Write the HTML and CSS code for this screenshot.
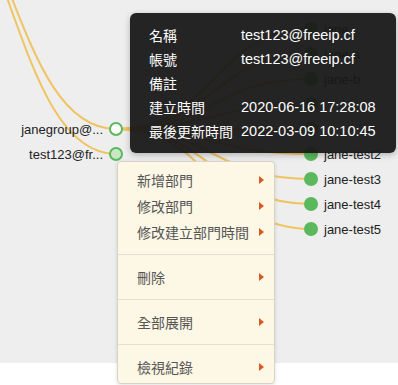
FILE: index.html
```html
<!DOCTYPE html>
<html lang="zh-Hant">
<head>
    <meta charset="UTF-8">
    <meta name="viewport" content="width=device-width, initial-scale=1.0">
    <title>部門樹</title>
    <link rel="stylesheet" href="styles.css">
</head>
<body>
    <div class="canvas">
        <svg class="tree" width="398" height="363" viewBox="0 0 398 363">
            <g class="links">
                <path d="M-96,-142 C10,-142 10,129 116,129"/>
                <path d="M-96,-142 C10,-142 10,154 116,154"/>
                <path d="M116,129 C213.5,129 213.5,29 311,29"/>
                <path d="M116,129 C213.5,129 213.5,54 311,54"/>
                <path d="M116,129 C213.5,129 213.5,79 311,79"/>
                <path d="M116,129 C213.5,129 213.5,104 311,104"/>
                <path d="M116,129 C213.5,129 213.5,129 311,129"/>
                <path d="M116,129 C213.5,129 213.5,154 311,154"/>
                <path d="M116,129 C213.5,129 213.5,179 311,179"/>
                <path d="M116,129 C213.5,129 213.5,204 311,204"/>
                <path d="M116,129 C213.5,129 213.5,229 311,229"/>
            </g>
            <g class="nodes">
                <g class="node open" transform="translate(116,129)">
                    <circle r="6"/>
                    <text x="-13" dy="0.35em" text-anchor="end">janegroup@...</text>
                </g>
                <g class="node closed" transform="translate(116,154)">
                    <circle r="6"/>
                    <text x="-13" dy="0.35em" text-anchor="end">test123@fr...</text>
                </g>
                <g class="node leaf" transform="translate(311,29)">
                    <circle r="6"/>
                    <text x="13" dy="0.35em">jane</text>
                </g>
                <g class="node leaf" transform="translate(311,54)">
                    <circle r="6"/>
                    <text x="13" dy="0.35em">jane-a</text>
                </g>
                <g class="node leaf" transform="translate(311,79)">
                    <circle r="6"/>
                    <text x="13" dy="0.35em">jane-b</text>
                </g>
                <g class="node leaf" transform="translate(311,104)">
                    <circle r="6"/>
                </g>
                <g class="node leaf" transform="translate(311,129)">
                    <circle r="6"/>
                </g>
                <g class="node leaf" transform="translate(311,154)">
                    <circle r="6"/>
                    <text x="13" dy="0.35em">jane-test2</text>
                </g>
                <g class="node leaf" transform="translate(311,179)">
                    <circle r="6"/>
                    <text x="13" dy="0.35em">jane-test3</text>
                </g>
                <g class="node leaf" transform="translate(311,204)">
                    <circle r="6"/>
                    <text x="13" dy="0.35em">jane-test4</text>
                </g>
                <g class="node leaf" transform="translate(311,229)">
                    <circle r="6"/>
                    <text x="13" dy="0.35em">jane-test5</text>
                </g>
            </g>
        </svg>
    </div>

    <div class="tip">
        <div class="tip-row"><span class="tip-key">名稱</span><span class="tip-val">test123@freeip.cf</span></div>
        <div class="tip-row"><span class="tip-key">帳號</span><span class="tip-val">test123@freeip.cf</span></div>
        <div class="tip-row"><span class="tip-key">備註</span><span class="tip-val"></span></div>
        <div class="tip-row"><span class="tip-key">建立時間</span><span class="tip-val">2020-06-16 17:28:08</span></div>
        <div class="tip-row"><span class="tip-key">最後更新時間</span><span class="tip-val">2022-03-09 10:10:45</span></div>
    </div>

    <div class="menu">
        <ul class="menu-group">
            <li class="menu-item">新增部門<span class="arrow"></span></li>
            <li class="menu-item">修改部門<span class="arrow"></span></li>
            <li class="menu-item">修改建立部門時間<span class="arrow"></span></li>
        </ul>
        <ul class="menu-group">
            <li class="menu-item">刪除<span class="arrow"></span></li>
        </ul>
        <ul class="menu-group">
            <li class="menu-item">全部展開<span class="arrow"></span></li>
        </ul>
        <ul class="menu-group">
            <li class="menu-item">檢視紀錄<span class="arrow"></span></li>
        </ul>
    </div>
</body>
</html>
```

FILE: styles.css
```css
body {
    margin: 0;
    background: #fff;
    font-family: "Liberation Sans", "Noto Sans CJK TC", sans-serif;
}
.canvas {
    height: 363px;
    background: #eeeeee;
    overflow: hidden;
}
.tree {
    display: block;
}
.links path {
    fill: none;
    stroke: #f0c462;
    stroke-width: 2;
}
.node circle {
    stroke: #5cb85c;
    stroke-width: 2;
}
.node.open circle {
    fill: #fff;
}
.node.closed circle {
    fill: #c9e7c4;
}
.node.leaf circle {
    fill: #5cb85c;
}
.node text {
    font-size: 13px;
    fill: #222;
}

/* tooltip */
.tip {
    position: absolute;
    left: 130px;
    top: 13px;
    width: 266px;
    box-sizing: border-box;
    padding: 10px 10px 10px 19px;
    background: rgba(24, 24, 24, 0.95);
    border-radius: 6px;
    box-shadow: 0 2px 6px rgba(0, 0, 0, 0.25);
    color: #fff;
    font-size: 14px;
}
.tip-row {
    display: flex;
    height: 24px;
    align-items: center;
}
.tip-key {
    width: 92px;
    flex-shrink: 0;
}
.tip-val {
    font-size: 14.5px;
}

/* context menu */
.menu {
    position: absolute;
    left: 117px;
    top: 161px;
    width: 158px;
    box-sizing: border-box;
    padding: 5px 0 3px;
    background: #fdf7e6;
    border: 1px solid #d6d3cb;
    border-radius: 4px;
    box-shadow: 0 1px 4px rgba(0, 0, 0, 0.12);
}
.menu-group {
    list-style: none;
    margin: 0;
    padding: 0;
}
.menu-group + .menu-group {
    border-top: 1px solid #e3dfd4;
    margin-top: 9px;
    padding-top: 9px;
}
.menu-item {
    display: flex;
    align-items: center;
    justify-content: space-between;
    height: 26px;
    padding: 0 10px 0 19px;
    font-size: 14px;
    color: #555;
}
.arrow {
    width: 0;
    height: 0;
    border-top: 4px solid transparent;
    border-bottom: 4px solid transparent;
    border-left: 5px solid #d65a22;
}
```
